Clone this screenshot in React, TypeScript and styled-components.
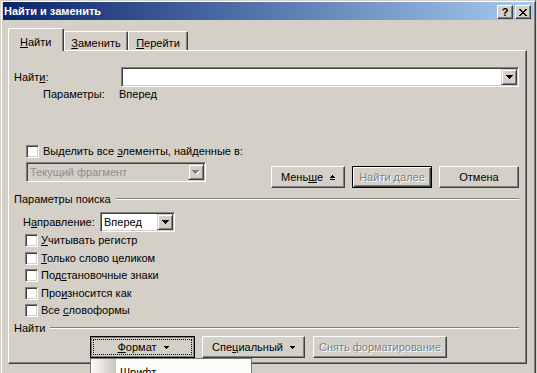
import styled, { createGlobalStyle, css } from "styled-components";

const face = "#d4d0c8";
const light = "#ffffff";
const shadow = "#808080";
const dark = "#404040";

const GlobalStyle = createGlobalStyle`
  html, body {
    margin: 0;
    padding: 0;
    background: ${face};
  }
  body {
    font-family: "Liberation Sans", Arial, sans-serif;
    font-size: 11px;
    line-height: 13px;
    color: #000;
  }
  * {
    box-sizing: border-box;
  }
`;

const raised = css`
  border: 1px solid;
  border-color: ${light} ${dark} ${dark} ${light};
  box-shadow: inset -1px -1px ${shadow}, inset 1px 1px ${face};
`;

const sunken = css`
  border: 1px solid;
  border-color: ${shadow} ${light} ${light} ${shadow};
  box-shadow: inset 1px 1px ${dark}, inset -1px -1px ${face};
`;

const Screen = styled.div`
  width: 537px;
  height: 373px;
  overflow: hidden;
`;

const Window = styled.div`
  width: 536px;
  background: ${face};
  border: 1px solid;
  border-color: ${face} ${dark} ${dark} ${face};
  box-shadow: inset 1px 1px ${light}, inset -1px -1px ${shadow};
  padding: 1px 2px 2px 2px;
`;

const TitleBar = styled.div`
  height: 18px;
  display: flex;
  align-items: center;
  padding: 0 2px 0 1px;
  background: linear-gradient(to right, #0a246a, #a6caf0);
`;

const Title = styled.div`
  color: #fff;
  font-weight: bold;
`;

const CaptionButtons = styled.div`
  margin-left: auto;
  align-self: flex-start;
  margin-top: 3px;
  display: flex;
  gap: 2px;
`;

const CaptionButton = styled.div`
  ${raised};
  width: 16px;
  height: 14px;
  background: ${face};
  display: flex;
  align-items: center;
  justify-content: center;
  font-weight: bold;
  font-size: 11px;
  line-height: 11px;
`;

const Client = styled.div`
  padding: 8px 6px 14px 5px;
`;

const TabStrip = styled.div`
  height: 23px;
  margin-bottom: -1px;
  display: flex;
  align-items: flex-end;
  position: relative;
  z-index: 1;
`;

const Tab = styled.div<{ $active?: boolean; $w: number }>`
  width: ${(p) => p.$w}px;
  height: ${(p) => (p.$active ? 23 : 19)}px;
  margin-bottom: ${(p) => (p.$active ? 0 : 1)}px;
  padding-top: ${(p) => (p.$active ? 7 : 5)}px;
  padding-left: ${(p) => (p.$active ? 11 : 0)}px;
  text-align: ${(p) => (p.$active ? "left" : "center")};
  background: ${face};
  border-top: 1px solid ${light};
  border-left: 1px solid ${light};
  border-right: 1px solid ${dark};
  border-radius: 2px 2px 0 0;
  box-shadow: inset -1px 0 ${shadow};
`;

const Panel = styled.div`
  position: relative;
  background: ${face};
  border: 1px solid;
  border-color: ${light} ${dark} ${dark} ${light};
  box-shadow: inset -1px -1px ${shadow};
  padding: 16px 7px 5px 5px;
  display: flex;
  flex-direction: column;
`;

const U = styled.span`
  text-decoration: underline;
  text-underline-offset: 1px;
`;

const Row = styled.div<{ $mt?: number; $pl?: number }>`
  display: flex;
  align-items: center;
  margin-top: ${(p) => p.$mt ?? 0}px;
  padding-left: ${(p) => p.$pl ?? 0}px;
`;

const FieldLabel = styled.div<{ $w: number }>`
  width: ${(p) => p.$w}px;
  flex-shrink: 0;
`;

const Combo = styled.div<{ $w?: number; $h?: number; $disabled?: boolean }>`
  ${sunken};
  ${(p) => (p.$w ? `width: ${p.$w}px;` : "flex: 1;")}
  height: ${(p) => p.$h ?? 20}px;
  padding: 1px;
  display: flex;
  background: ${(p) => (p.$disabled ? face : light)};
`;

const ComboText = styled.div<{ $disabled?: boolean }>`
  flex: 1;
  display: flex;
  align-items: center;
  padding-left: 2px;
  color: ${(p) => (p.$disabled ? "#8d8d8d" : "#000")};
  white-space: nowrap;
`;

const DropButton = styled.div`
  width: 16px;
  border: 1px solid;
  border-color: ${face} ${dark} ${dark} ${face};
  box-shadow: inset 1px 1px ${light}, inset -1px -1px ${shadow};
  background: ${face};
  display: flex;
  align-items: center;
  justify-content: center;
`;

const HighlightBlock = styled.div`
  display: flex;
  margin-top: 44px;
  padding-left: 12px;
`;

const HighlightColumn = styled.div`
  display: flex;
  flex-direction: column;
  gap: 4px;
`;

const CheckRow = styled.div<{ $h?: number; $gap?: number }>`
  display: flex;
  align-items: center;
  height: ${(p) => p.$h ?? 13}px;
  gap: ${(p) => p.$gap ?? 4}px;
  white-space: nowrap;
`;

const CheckBox = styled.div`
  ${sunken};
  width: 13px;
  height: 13px;
  flex-shrink: 0;
  background: ${light};
`;

const ActionButtons = styled.div`
  margin-left: auto;
  margin-top: 21px;
  display: flex;
  gap: 7px;
`;

const Button = styled.button<{ $w: number; $default?: boolean; $pressed?: boolean }>`
  position: relative;
  width: ${(p) => p.$w}px;
  height: 22px;
  margin: 0;
  padding: 0;
  font: inherit;
  color: #000;
  background: ${face};
  display: flex;
  align-items: center;
  justify-content: center;
  gap: 7px;
  white-space: nowrap;
  ${raised};

  ${(p) =>
    p.$default &&
    css`
      border: 1px solid #000;
      box-shadow: inset 1px 1px ${light}, inset -1px -1px ${dark},
        inset -2px -2px ${shadow};
    `}

  ${(p) =>
    p.$pressed &&
    css`
      border: 1px solid #000;
      box-shadow: inset 0 0 0 1px ${shadow};
      padding: 1px 0 0 1px;
      &::after {
        content: "";
        position: absolute;
        inset: 2px;
        border: 1px dotted #000;
      }
    `}

  &:disabled {
    color: ${shadow};
    text-shadow: 1px 1px 0 ${light};
  }
`;

const GroupHeader = styled.div<{ $mt: number }>`
  display: flex;
  height: 13px;
  margin-top: ${(p) => p.$mt}px;
  white-space: nowrap;
`;

const Rule = styled.div`
  flex: 1;
  height: 2px;
  margin: 5px 0 0 5px;
  border-top: 1px solid ${shadow};
  border-bottom: 1px solid ${light};
`;

const CheckList = styled.div`
  display: flex;
  flex-direction: column;
  padding-left: 11px;
`;

const BottomButtons = styled.div`
  display: flex;
  margin-top: 1px;
  padding-left: 76px;
`;

const MenuAnchor = styled.div`
  position: relative;
  margin-right: 7px;
`;

const Menu = styled.div`
  position: absolute;
  top: 100%;
  left: 0;
  z-index: 5;
  width: 162px;
  padding: 2px 1px;
  border: 1px solid #7b7b75;
  background: linear-gradient(to right, #fbfbf9, #c9c5bd) 0 0 / 25px 100%
      no-repeat,
    #fcfcfa;
`;

const MenuItem = styled.div`
  height: 22px;
  display: flex;
  align-items: center;
  padding-left: 28px;
`;

const Px = ({ d, w, h, fill = "#000" }: { d: string; w: number; h: number; fill?: string }) => (
  <svg width={w} height={h} viewBox={`0 0 ${w} ${h}`} shapeRendering="crispEdges">
    <path d={d} fill={fill} />
  </svg>
);

const arrowPath = "M0 0h7v1H0z M1 1h5v1H1z M2 2h3v1H2z M3 3h1v1H3z";
const smallArrow = "M0 0h5v1H0z M1 1h3v1H1z M2 2h1v1H2z";
const lessPath = "M2 0h1v1H2z M1 1h3v1H1z M0 2h5v1H0z M0 4h5v1H0z";
const closePath =
  "M0 0h2v1H0z M6 0h2v1H6z M1 1h2v1H1z M5 1h2v1H5z M2 2h4v1H2z M3 3h2v1H3z M2 4h4v1H2z M1 5h2v1H1z M5 5h2v1H5z M0 6h2v1H0z M6 6h2v1H6z";

const DisabledArrow = () => (
  <svg width={8} height={5} viewBox="0 0 8 5" shapeRendering="crispEdges">
    <path d={arrowPath} fill={light} transform="translate(1 1)" />
    <path d={arrowPath} fill={shadow} />
  </svg>
);

const options = [
  <><U>У</U>читывать регистр</>,
  <><U>Т</U>олько слово целиком</>,
  <>Под<U>с</U>тановочные знаки</>,
  <>Про<U>и</U>зносится как</>,
  <>Все <U>с</U>ловоформы</>,
];

export default function App() {
  return (
    <>
      <GlobalStyle />
      <Screen>
        <Window>
          <TitleBar>
            <Title>Найти и заменить</Title>
            <CaptionButtons>
              <CaptionButton>?</CaptionButton>
              <CaptionButton>
                <Px d={closePath} w={8} h={7} />
              </CaptionButton>
            </CaptionButtons>
          </TitleBar>

          <Client>
            <TabStrip>
              <Tab $active $w={56}>
                <U>Н</U>айти
              </Tab>
              <Tab $w={64}>
                <U>З</U>аменить
              </Tab>
              <Tab $w={60}>
                <U>П</U>ерейти
              </Tab>
            </TabStrip>

            <Panel>
              {/* find what */}
              <Row>
                <FieldLabel $w={107}>
                  Найт<U>и</U>:
                </FieldLabel>
                <Combo>
                  <ComboText />
                  <DropButton>
                    <Px d={arrowPath} w={7} h={4} />
                  </DropButton>
                </Combo>
              </Row>
              <Row $mt={1} $pl={29} style={{ height: 13 }}>
                <FieldLabel $w={76}>Параметры:</FieldLabel>
                <span>Вперед</span>
              </Row>

              {/* highlight + action buttons */}
              <HighlightBlock>
                <HighlightColumn>
                  <CheckRow>
                    <CheckBox />
                    <span>
                      Выделить все <U>э</U>лементы, найденные в:
                    </span>
                  </CheckRow>
                  <Combo $w={180} $disabled>
                    <ComboText $disabled>Текущий фрагмент</ComboText>
                    <DropButton>
                      <DisabledArrow />
                    </DropButton>
                  </Combo>
                </HighlightColumn>
                <ActionButtons>
                  <Button $w={74}>
                    <span>
                      Мень<U>ш</U>е
                    </span>
                    <Px d={lessPath} w={5} h={5} />
                  </Button>
                  <Button $w={80} $default disabled>
                    Найти далее
                  </Button>
                  <Button $w={80}>Отмена</Button>
                </ActionButtons>
              </HighlightBlock>

              {/* search options */}
              <GroupHeader $mt={5}>
                Параметры поиска
                <Rule />
              </GroupHeader>
              <Row $mt={6} $pl={9}>
                <FieldLabel $w={77}>
                  Н<U>а</U>правление:
                </FieldLabel>
                <Combo $w={75}>
                  <ComboText>Вперед</ComboText>
                  <DropButton>
                    <Px d={arrowPath} w={7} h={4} />
                  </DropButton>
                </Combo>
              </Row>
              <CheckList>
                {options.map((label, i) => (
                  <CheckRow key={i} $h={17.5} $gap={3}>
                    <CheckBox />
                    <span>{label}</span>
                  </CheckRow>
                ))}
              </CheckList>

              {/* find formatting */}
              <GroupHeader $mt={2.5}>
                Найти
                <Rule />
              </GroupHeader>
              <BottomButtons>
                <MenuAnchor>
                  <Button $w={105} $pressed>
                    <span>
                      <U>Ф</U>ормат
                    </span>
                    <Px d={smallArrow} w={5} h={3} />
                  </Button>
                  <Menu>
                    <MenuItem>Шрифт...</MenuItem>
                  </Menu>
                </MenuAnchor>
                <Button $w={103} style={{ marginRight: 8 }}>
                  <span>
                    Спе<U>ц</U>иальный
                  </span>
                  <Px d={smallArrow} w={5} h={3} />
                </Button>
                <Button $w={134} disabled>
                  Снять форматирование
                </Button>
              </BottomButtons>
            </Panel>
          </Client>
        </Window>
      </Screen>
    </>
  );
}
